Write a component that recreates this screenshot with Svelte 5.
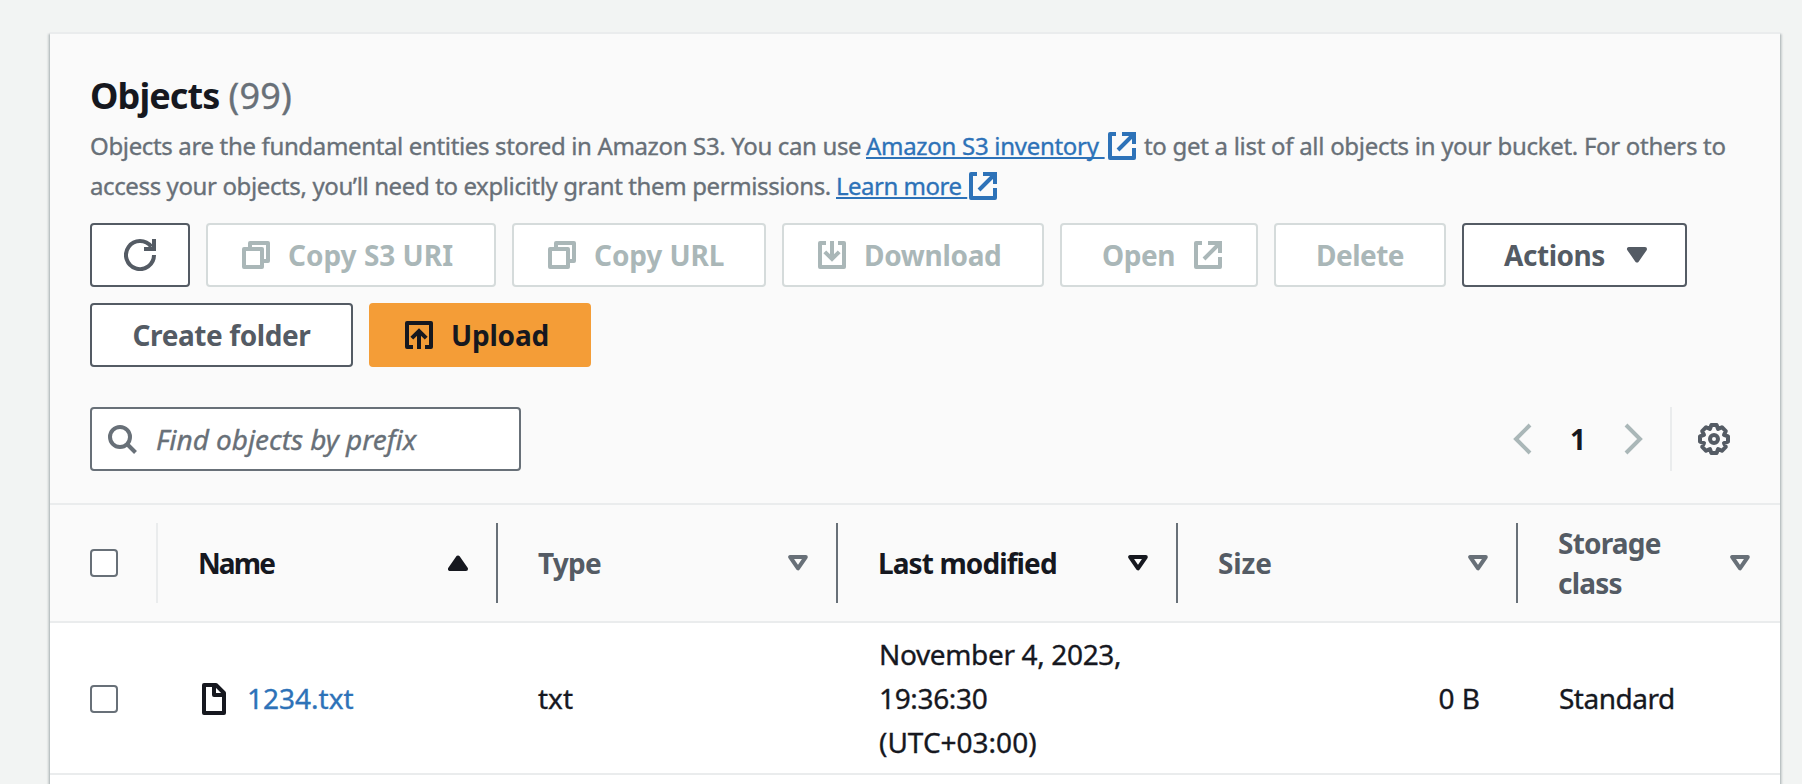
<script>
  const columns = [
    { id: 'name', label: 'Name', state: 'asc' },
    { id: 'type', label: 'Type', state: 'none' },
    { id: 'modified', label: 'Last modified', state: 'active' },
    { id: 'size', label: 'Size', state: 'none' },
    { id: 'storage', label: 'Storage class', state: 'none' }
  ];

  const objects = [
    {
      name: '1234.txt',
      type: 'txt',
      modified: ['November 4, 2023,', '19:36:30', '(UTC+03:00)'],
      size: '0 B',
      storage: 'Standard'
    }
  ];
</script>

{#snippet icon(name)}
  <svg class="icon" viewBox="0 0 32 32" width="32" height="32" aria-hidden="true">
    {#if name === 'refresh'}
      <path d="M30 16A14 14 0 1 1 27.3 7.8" /><path d="M30 0V10H20" />
    {:else if name === 'copy'}
      <path d="M4 10H22V28H4Z" stroke-linejoin="round" /><path d="M10 8V4H28V22H24" stroke-linejoin="round" />
    {:else if name === 'download'}
      <path d="M10 4H4V28H28V4H22" stroke-linejoin="round" /><path d="M16 2V19M8.8 12.8L16 20L23.2 12.8" />
    {:else if name === 'upload'}
      <path d="M10 28H4V4H28V28H22" stroke-linejoin="round" /><path d="M16 30V13M8.8 19.2L16 12L23.2 19.2" />
    {:else if name === 'external'}
      <path d="M10 4H4V28H28V18" stroke-linejoin="round" /><path d="M16 4H28V14M27.5 4.5L12 20" />
    {:else if name === 'search'}
      <circle cx="14" cy="14" r="10" /><path d="M21 21L29.5 29.5" />
    {:else if name === 'file'}
      <path d="M6 2H18L26 10V30H6Z" stroke-linejoin="round" /><path d="M16 2V12H26" stroke-linejoin="round" />
    {:else if name === 'prev'}
      <path d="M24 2L10 16L24 30" />
    {:else if name === 'next'}
      <path d="M8 2L22 16L8 30" />
    {:else if name === 'caret'}
      <path class="solid" d="M8 10H24L16 21.5Z" />
    {:else if name === 'gear'}
      <g transform="translate(16 16)">
        <path
          d="M-2.6 -14H2.6L4.1 -10L7.9 -11.8L11.8 -7.9L10 -4.1L14 -2.6V2.6L10 4.1L11.8 7.9L7.9 11.8L4.1 10L2.6 14H-2.6L-4.1 10L-7.9 11.8L-11.8 7.9L-10 4.1L-14 2.6V-2.6L-10 -4.1L-11.8 -7.9L-7.9 -11.8L-4.1 -10Z"
          stroke-linejoin="round"
        />
        <circle r="4" />
      </g>
    {/if}
  </svg>
{/snippet}

{#snippet sorter(state)}
  <svg class="sorter {state}" viewBox="0 0 20 16" width="20" height="16" aria-hidden="true">
    <path d={state === 'asc' ? 'M2 14H18L10 2.5Z' : 'M2.2 2H17.8L10 13.3Z'} />
  </svg>
{/snippet}

<main class="panel">
  <header class="head">
    <h2><span class="title">Objects</span> <span class="count">(99)</span></h2>
    <div class="desc">
      <div class="line">
        <span class="d1">Objects are the fundamental entities stored in Amazon S3. You can use</span>
        <a class="l1" href="#inventory"><span>Amazon S3 inventory&nbsp;</span>{@render icon('external')}</a>
        <span class="d2">to get a list of all objects in your bucket. For others to</span>
      </div>
      <div class="line">
        <span class="d3">access your objects, you’ll need to explicitly grant them permissions.</span>
        <a class="l2" href="#learn"><span>Learn more&nbsp;</span>{@render icon('external')}</a>
      </div>
    </div>

    <div class="actions">
      <button class="btn refresh" aria-label="Refresh">{@render icon('refresh')}</button>
      <button class="btn off uri" disabled>{@render icon('copy')}<span>Copy S3 URI</span></button>
      <button class="btn off url" disabled>{@render icon('copy')}<span>Copy URL</span></button>
      <button class="btn off download" disabled>{@render icon('download')}<span>Download</span></button>
      <button class="btn off open" disabled><span>Open</span>{@render icon('external')}</button>
      <button class="btn off delete" disabled><span>Delete</span></button>
      <button class="btn menu"><span>Actions</span>{@render icon('caret')}</button>
      <button class="btn create"><span>Create folder</span></button>
      <button class="btn upload">{@render icon('upload')}<span>Upload</span></button>
    </div>

    <div class="tools">
      <div class="search">{@render icon('search')}<span>Find objects by prefix</span></div>
      <div class="pager">
        {@render icon('prev')}
        <b>1</b>
        {@render icon('next')}
      </div>
      <div class="prefs">{@render icon('gear')}</div>
    </div>
  </header>

  <div class="grid thead">
    <div class="check"><i class="box"></i><i class="sep"></i></div>
    {#each columns as c, i}
      <div class="th {c.id} {c.state}">
        <span class="label">{c.label}</span>
        {@render sorter(c.state)}
        {#if i < columns.length - 1}<i class="sep"></i>{/if}
      </div>
    {/each}
  </div>

  {#each objects as o}
    <div class="grid row">
      <div class="check"><i class="box"></i></div>
      <div class="td file">{@render icon('file')}<a href="#object">{o.name}</a></div>
      <div class="td">{o.type}</div>
      <div class="td date">
        <div>{#each o.modified as part}<div>{part}</div>{/each}</div>
      </div>
      <div class="td size">{o.size}</div>
      <div class="td storage">{o.storage}</div>
    </div>
  {/each}
</main>

<style>
  :global(body) {
    background: #f2f4f3;
    overflow: hidden;
  }
  .panel {
    box-sizing: border-box;
    width: 1730px;
    height: 752px;
    margin: 32px 0 0 50px;
    border-top: 2px solid #eaeced;
    background: #fff;
    box-shadow:
      0 2px 2px 0 rgba(0, 28, 36, 0.3),
      2px 2px 2px 0 rgba(0, 28, 36, 0.15),
      -2px 2px 2px 0 rgba(0, 28, 36, 0.15);
    font-family: 'Noto Sans', sans-serif;
    font-size: 28px;
    color: #16181f;
  }
  .head {
    box-sizing: border-box;
    height: 471px;
    padding: 40px 40px 0;
    background: #fafafa;
    border-bottom: 2px solid #eaeced;
  }
  h2 {
    display: flex;
    gap: 9px;
    margin: 0 0 8px;
    font-size: 36px;
    line-height: 44px;
    white-space: nowrap;
  }
  .title { letter-spacing: -0.9px; }
  .count { font-weight: 400; color: #687078; letter-spacing: 0.2px; }
  .count, .desc, .search, .td { -webkit-text-stroke: 0.35px currentColor; }
  .icon {
    display: block;
    flex: none;
    fill: none;
    stroke: currentColor;
    stroke-width: 4;
  }
  .icon .solid { fill: currentColor; stroke-linejoin: round; }
  .desc {
    font-size: 24px;
    line-height: 40px;
    color: #687078;
  }
  .line {
    display: flex;
    align-items: center;
    height: 40px;
    white-space: nowrap;
  }
  .line a {
    display: flex;
    align-items: center;
    color: #2d72b8;
    text-decoration: none;
    margin-left: 6px;
  }
  .line a span {
    text-decoration: underline;
    text-decoration-thickness: 2px;
    text-underline-offset: 2px;
    text-decoration-skip-ink: none;
  }
  .d1 { width: 770px; letter-spacing: -0.35px; }
  .l1 { width: 272px; letter-spacing: -0.29px; }
  .l1 span { width: 240px; }
  .d2 { margin-left: 6px; letter-spacing: -0.29px; }
  .d3 { width: 740px; letter-spacing: -0.38px; }
  .l2 { letter-spacing: -0.5px; }
  .l2 span { width: 131px; }
  .actions {
    display: flex;
    flex-wrap: wrap;
    gap: 16px;
    margin-top: 17px;
  }
  .btn {
    display: flex;
    box-sizing: border-box;
    align-items: center;
    height: 64px;
    padding: 0 32px;
    gap: 16px;
    border: 2px solid #545b64;
    border-radius: 4px;
    background: #fff;
    color: #545b64;
    font: 700 28px/40px 'Noto Sans', sans-serif;
    white-space: nowrap;
  }
  .btn.off { border-color: #d5dbdb; color: #aab7b8; }
  .refresh { width: 100px; }
  .uri { width: 290px; }
  .url { width: 254px; letter-spacing: -0.1px; }
  .download { width: 262px; letter-spacing: -0.3px; }
  .open { width: 198px; padding-left: 40px; justify-content: space-between; letter-spacing: -0.4px; }
  .delete { width: 172px; padding: 0; justify-content: center; letter-spacing: -0.5px; }
  .menu { width: 225px; padding-left: 40px; justify-content: space-between; letter-spacing: -0.45px; }
  .create { width: 263px; padding: 0; justify-content: center; letter-spacing: -0.4px; }
  .btn.upload { width: 222px; border-color: #f49d37; background: #f49d37; color: #16181f; letter-spacing: -0.2px; }
  .tools {
    display: flex;
    align-items: center;
    margin-top: 40px;
    height: 64px;
  }
  .search {
    display: flex;
    box-sizing: border-box;
    align-items: center;
    width: 431px;
    height: 64px;
    padding-left: 14px;
    gap: 18px;
    border: 2px solid #687078;
    border-radius: 4px;
    background: #fff;
    color: #687078;
    font-style: italic;
    letter-spacing: -0.05px;
  }
  .pager {
    display: flex;
    align-items: center;
    margin-left: auto;
    padding-right: 20px;
    color: #aab7b8;
  }
  .pager b {
    width: 80px;
    text-align: center;
    color: #16181f;
  }
  .prefs {
    display: flex;
    align-items: center;
    height: 64px;
    padding: 0 10px 0 26px;
    border-left: 2px solid #eaeced;
    color: #545b64;
  }
  .grid {
    display: grid;
    grid-template-columns: 108px repeat(4, 340px) 262px;
    align-items: center;
    box-sizing: border-box;
    border-bottom: 2px solid #eaeced;
  }
  .thead { height: 118px; background: #fafafa; }
  .check {
    display: flex;
    align-items: center;
    justify-content: space-between;
    padding-left: 40px;
  }
  .box {
    box-sizing: border-box;
    width: 28px;
    height: 28px;
    border: 2px solid #687078;
    border-radius: 4px;
    background: #fff;
  }
  .sep { width: 2px; height: 80px; background: #687078; }
  .check .sep { background: #eaeced; }
  .th {
    display: flex;
    align-items: center;
    padding-left: 40px;
    color: #545b64;
    font-weight: 700;
    line-height: 40px;
    letter-spacing: -0.8px;
  }
  .th.asc, .th.active { color: #16181f; }
  .label { flex: 1; }
  .name .label { letter-spacing: -1.9px; }
  .modified .label { letter-spacing: -0.9px; }
  .size .label { letter-spacing: -0.1px; }
  .storage .label { flex: none; width: 130px; }
  .storage .sorter { margin-left: auto; margin-right: 30px; }
  .sorter {
    flex: none;
    margin-right: 28px;
    fill: none;
    stroke: currentColor;
    stroke-width: 4;
    stroke-linejoin: round;
  }
  .sorter.none { color: #687078; }
  .sorter.asc { fill: currentColor; }
  .row { height: 152px; }
  .row .check { padding-top: 2px; }
  .td {
    display: flex;
    align-items: center;
    padding-left: 40px;
    line-height: 44px;
    white-space: nowrap;
  }
  .file { gap: 17px; }
  .file .icon { margin-top: 2px; }
  .file a { color: #2d72b8; text-decoration: none; }
  .date { letter-spacing: -0.35px; padding-left: 41px; }
  .date div div:last-child { letter-spacing: 0; }
  .td.size { justify-content: flex-end; padding-right: 38px; }
  .td.storage { letter-spacing: -0.5px; padding-left: 41px; }
</style>
